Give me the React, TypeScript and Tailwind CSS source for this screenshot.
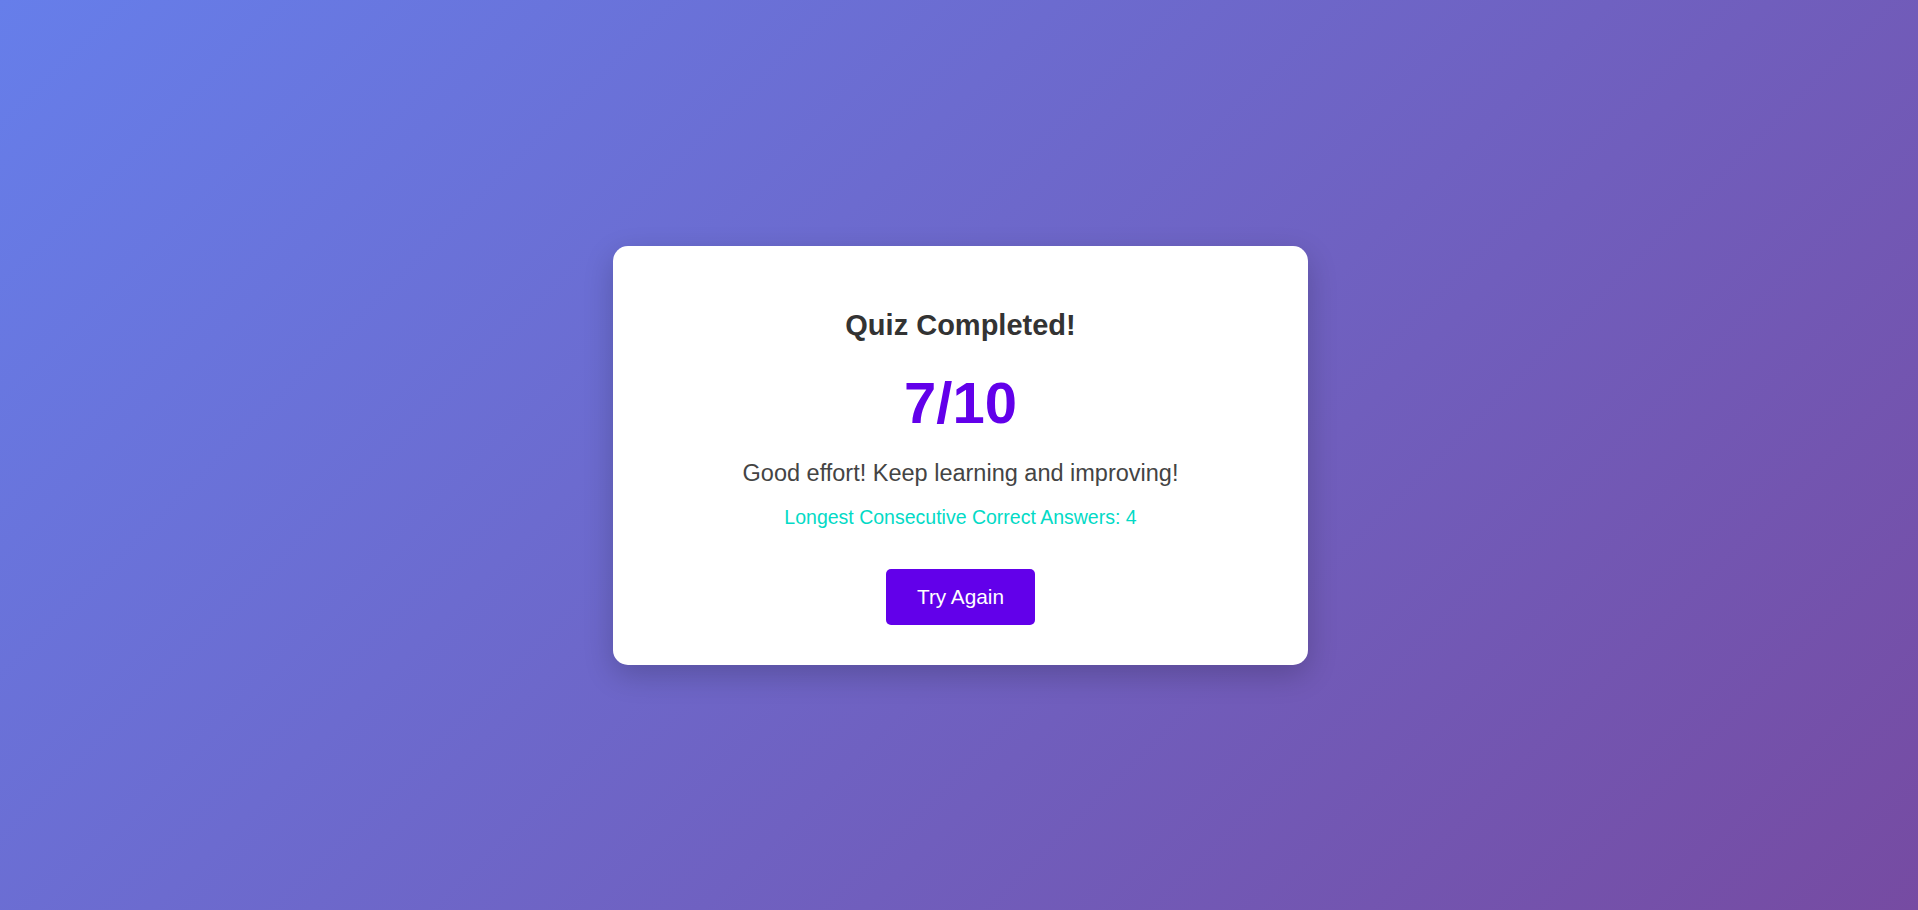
import React from "react";

export default function App() {
  return (
    <div
      className="w-full h-[910px] flex items-center justify-center bg-[linear-gradient(135deg,#667eea_0%,#764ba2_100%)]"
      style={{ fontFamily: '"Liberation Sans", Arial, sans-serif' }}
    >
      <div className="ml-[3px] w-[695px] h-[419px] bg-white rounded-[15px] shadow-[0_10px_30px_rgba(0,0,0,0.2)] flex flex-col items-center pt-[63px] pb-[39px]">
        <h2 className="text-[29px] leading-[33px] font-bold text-[#333333]">Quiz Completed!</h2>
        <div className="mt-[29px] text-[58px] leading-[64px] font-bold text-[#6200ea]">7/10</div>
        <p className="mt-[25px] text-[23.5px] leading-[27px] text-[#444444]">Good effort! Keep learning and improving!</p>
        <p className="mt-[19px] text-[19.5px] leading-[22px] text-[#03dac6]">Longest Consecutive Correct Answers: 4</p>
        <button className="mt-[41px] h-[56px] px-[31px] rounded-[5px] bg-[#6200ea] text-white text-[20.8px] leading-[24px]">
          Try Again
        </button>
      </div>
    </div>
  );
}
